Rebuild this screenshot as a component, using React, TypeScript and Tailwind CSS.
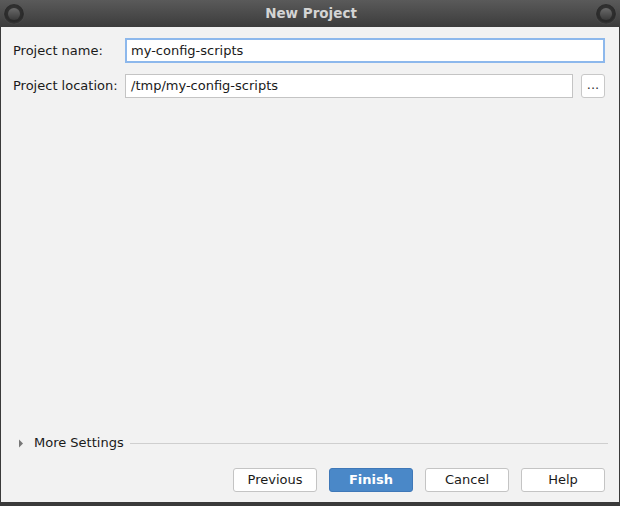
import React from "react";

function Knob() {
  return (
    <div className="w-[20px] h-[20px] rounded-full bg-[radial-gradient(circle_at_50%_40%,#3a3a3a_0%,#2a2a2a_60%,#555_100%)] flex items-center justify-center shadow-[0_0_1px_#666]">
      <div className="w-[12px] h-[12px] rounded-full bg-[linear-gradient(#6a6a6a,#3a3a3a)]" />
    </div>
  );
}

function Btn({ children, primary }: { children: React.ReactNode; primary?: boolean }) {
  return (
    <button
      className={
        primary
          ? "w-[84px] h-[24px] rounded-[3px] border border-[#3f78b8] bg-[#4a88c8] text-white font-bold text-[13px]"
          : "w-[84px] h-[24px] rounded-[3px] border border-[#c4c4c4] bg-white text-[#1a1a1a] text-[13px]"
      }
    >
      {children}
    </button>
  );
}

export default function App() {
  return (
    <div
      className="w-[620px] h-[506px] flex flex-col bg-[#3a3a3a] overflow-hidden"
      style={{ fontFamily: '"DejaVu Sans", sans-serif' }}
    >
      <div className="h-[27px] shrink-0 flex items-center justify-between px-[4px] bg-[linear-gradient(#5a5a5a,#3c3c3c)]">
        <Knob />
        <div className="text-[13.5px] font-bold text-[#d4d4d4] pl-[2px]">New Project</div>
        <Knob />
      </div>
      <div className="flex-1 mx-[1px] mb-[4px] bg-[#f2f2f2] flex flex-col text-[13px] text-[#1a1a1a]">
        <div className="flex flex-col gap-[11px] pt-[11px] pl-[12px] pr-[14px]">
          <div className="flex items-center h-[25px]">
            <div className="w-[112px]">Project name:</div>
            <div className="flex-1 h-[25px] border-2 border-[#8db8ec] bg-white flex items-center pl-[4px]">
              my-config-scripts
            </div>
          </div>
          <div className="flex items-center h-[24px]">
            <div className="w-[112px]">Project location:</div>
            <div className="flex-1 h-[24px] border border-[#c4c4c4] bg-white flex items-center pl-[5px]">
              /tmp/my-config-scripts
            </div>
            <div className="ml-[8px] w-[24px] h-[24px] rounded-[3px] border border-[#c8c8c8] bg-white flex items-center justify-center text-[13px] text-[#333] pb-[2px]">
              ...
            </div>
          </div>
        </div>
        <div className="flex-1" />
        <div className="flex items-center pl-[17px] pr-[11px] h-[20px]">
          <svg width="6" height="9" viewBox="0 0 6 9" className="mr-[10px]">
            <path d="M1 0.5 L5 4.5 L1 8.5 Z" fill="#777" />
          </svg>
          <span>More Settings</span>
          <div className="flex-1 h-px bg-[#cfcfcf] ml-[6px] mt-[1px]" />
        </div>
        <div className="flex justify-end gap-[12px] pr-[14px] pt-[15px] pb-[10px]">
          <Btn>Previous</Btn>
          <Btn primary>Finish</Btn>
          <Btn>Cancel</Btn>
          <Btn>Help</Btn>
        </div>
      </div>
    </div>
  );
}
